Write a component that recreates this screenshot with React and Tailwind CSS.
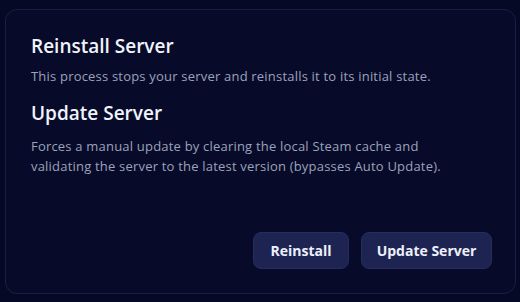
export default function App() {
  return (
    <div className="w-[520px] h-[302px] bg-[#050926] pt-[9px] pl-[5px] pr-[4px] pb-[8px]" style={{ fontFamily: '"Open Sans", "Noto Sans", sans-serif' }}>
      <div className="h-full rounded-[12px] border border-[#1b2040] bg-[#070b29] pl-[25px] pr-[23px] pt-[23px] pb-[24px] flex flex-col">
        <h2 className="text-[19px] leading-[26px] font-semibold text-[#f1f3fb]">Reinstall Server</h2>
        <p className="mt-[8px] text-[13px] leading-[19px] text-[#9ca2ba] tracking-[0.2px]">This process stops your server and reinstalls it to its initial state.</p>
        <h2 className="mt-[14px] text-[19px] leading-[26px] font-semibold text-[#f1f3fb]">Update Server</h2>
        <p className="mt-[10px] max-w-[445px] text-[13px] leading-[20px] text-[#9ca2ba] tracking-[0.2px]">Forces a manual update by clearing the local Steam cache and validating the server to the latest version (bypasses Auto Update).</p>
        <div className="mt-auto flex justify-end gap-[12px]">
          <button className="h-[37px] w-[96px] rounded-[8px] bg-[#1e2452] border border-[#262c5c] text-[14px] font-bold text-[#eef0fa]">Reinstall</button>
          <button className="h-[37px] w-[131px] rounded-[8px] bg-[#1e2452] border border-[#262c5c] text-[14px] font-bold text-[#eef0fa]">Update Server</button>
        </div>
      </div>
    </div>
  );
}
